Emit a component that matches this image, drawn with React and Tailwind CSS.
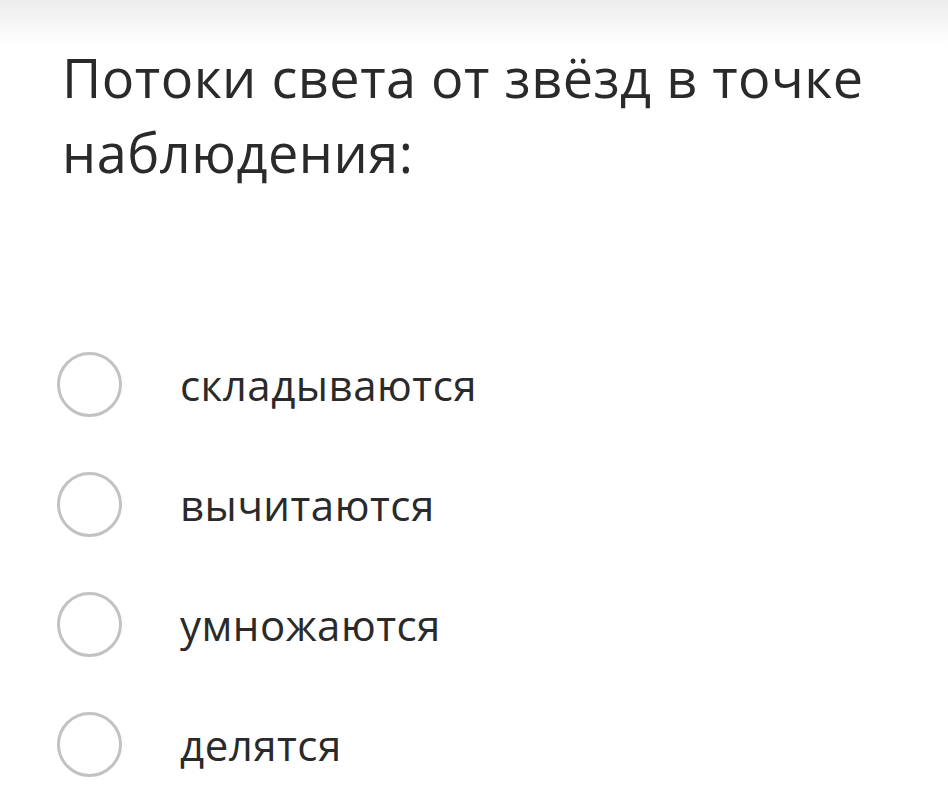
const options = ["складываются", "вычитаются", "умножаются", "делятся"];

export default function App() {
  return (
    <div className="relative w-[948px] h-[807px] overflow-hidden bg-white" style={{ fontFamily: '"Open Sans", sans-serif' }}>
      <div className="absolute inset-x-0 top-0 h-[44px] bg-gradient-to-b from-[#ececec] to-white" />
      <div className="relative pl-[62px] pr-6 pt-[40px]">
        <h1 className="text-[54px] leading-[75px] font-normal text-[#2a2a2a] tracking-[0.5px]">
          Потоки света от звёзд в точке наблюдения:
        </h1>
        <div className="mt-[162px] flex flex-col gap-[55px] -ml-[5px]">
          {options.map((opt) => (
            <label key={opt} className="flex items-center gap-[58px]">
              <span className="w-[65px] h-[65px] rounded-full border-[3px] border-[#c2c2c2] shrink-0" />
              <span className="text-[42px] leading-[65px] text-[#2a2a2a] tracking-[0.5px]">{opt}</span>
            </label>
          ))}
        </div>
      </div>
    </div>
  );
}
